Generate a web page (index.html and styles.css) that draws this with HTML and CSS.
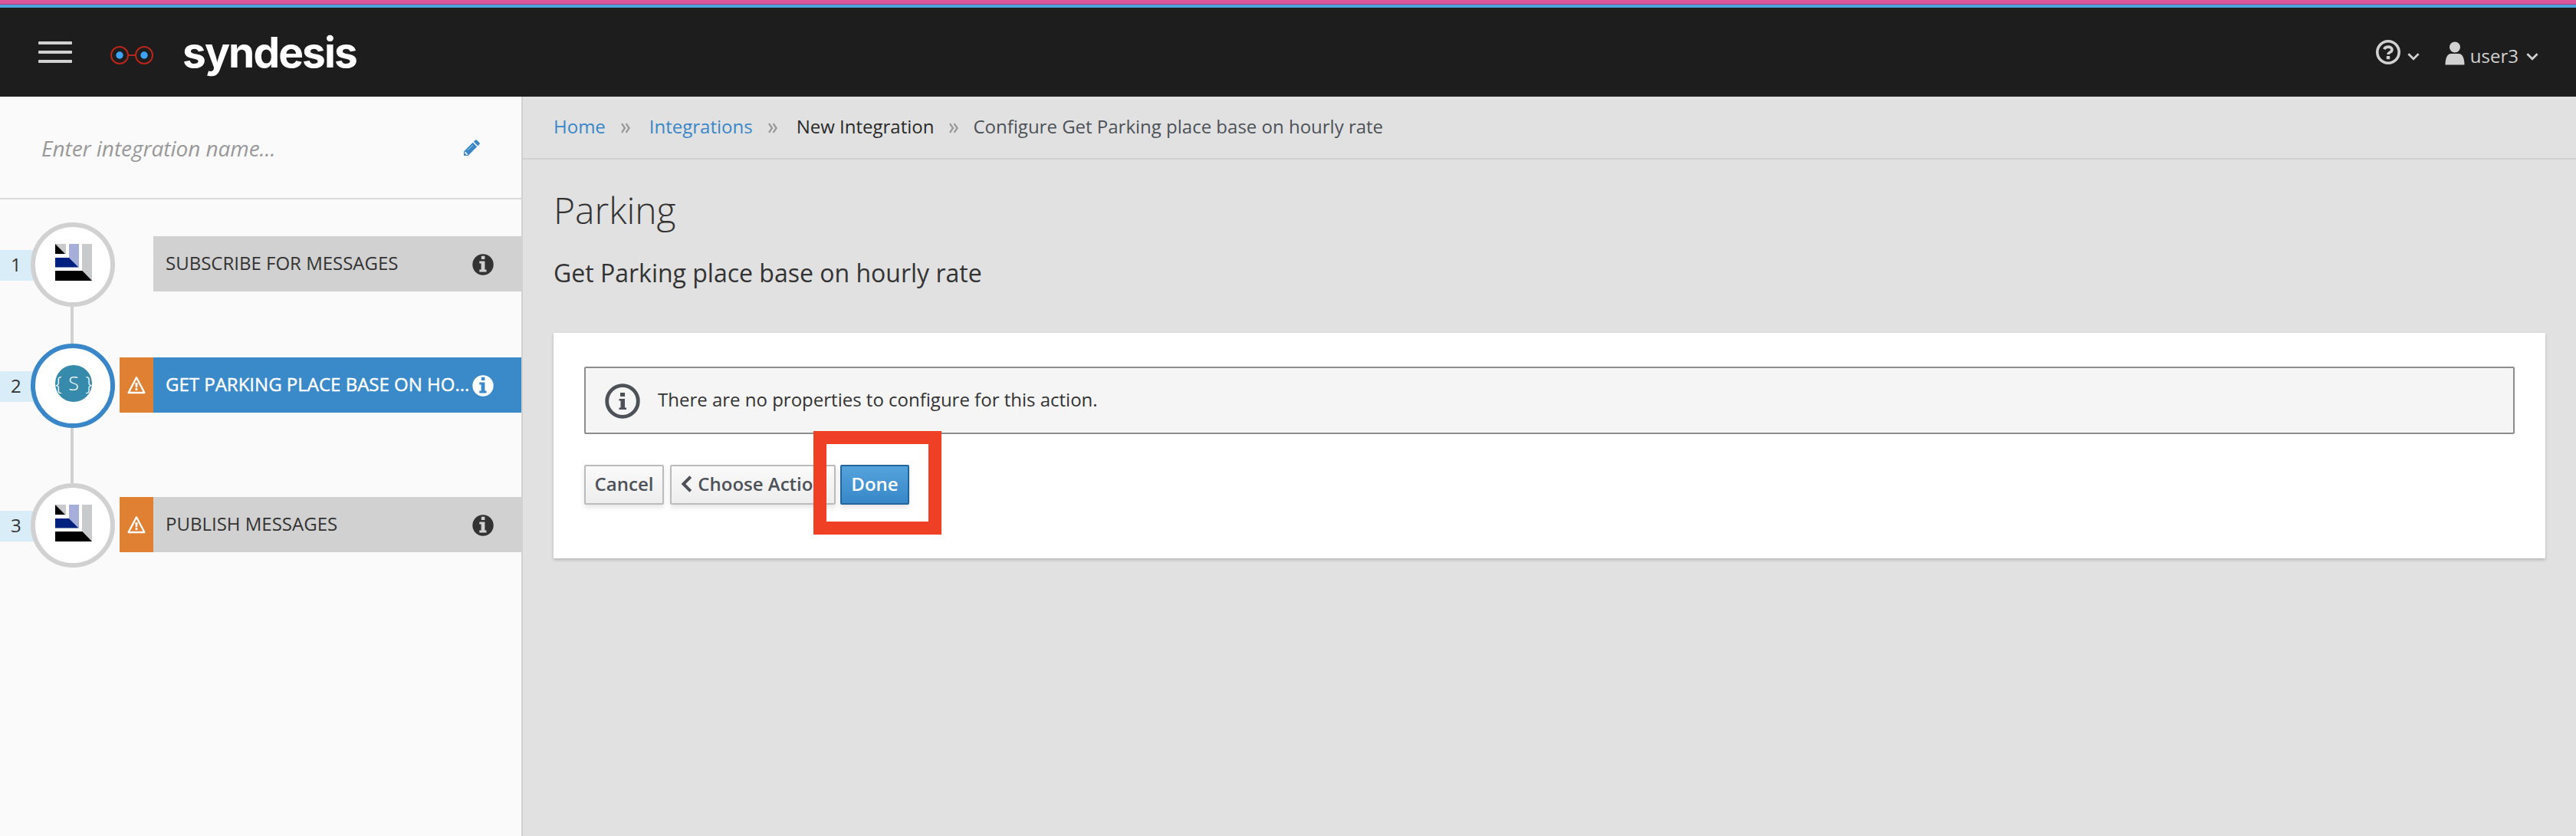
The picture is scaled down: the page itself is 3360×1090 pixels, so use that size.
FILE: index.html
```html
<!DOCTYPE html>
<html lang="en">
<head>
<meta charset="utf-8">
<title>Syndesis</title>
<link rel="stylesheet" href="styles.css">
</head>
<body>
<svg class="defs" width="0" height="0" aria-hidden="true">
  <symbol id="info" viewBox="0 0 28 28">
    <circle cx="14" cy="14" r="13.7" fill="currentColor"/>
    <path class="info-mark" d="M11.8 2.7h4.6v4.3h-4.6zM9.3 9.6h7.1v11h2.1v3H9.3v-3h2.3v-8H9.3z"/>
  </symbol>
  <symbol id="warning" viewBox="0 0 24 24">
    <path d="M12 2.2 22.4 22H1.6Z" fill="none" stroke="currentColor" stroke-width="2.3" stroke-linejoin="round"/>
    <path d="M10.4 9h3.2l-.4 6.2h-2.4zM10.6 16.3h2.8v2.6h-2.8z" fill="currentColor"/>
  </symbol>
  <symbol id="caret" viewBox="0 0 16 10">
    <path d="M1.4 1.3 8 7.8l6.6-6.5" fill="none" stroke="currentColor" stroke-width="2.7"/>
  </symbol>
  <symbol id="angles" viewBox="0 0 12 14">
    <path d="M1 1.2 5 7l-4 5.8M6.6 1.2l4 5.8-4 5.8" fill="none" stroke="currentColor" stroke-width="2.3"/>
  </symbol>
  <symbol id="amq" viewBox="0 0 48 48">
    <path d="M0 0h14v14z" fill="#c9cacc"/>
    <path d="M0 0 13 13H0z" fill="#000"/>
    <path d="M18 0h13v31L18 18z" fill="#a5afda"/>
    <path d="M0 18h18l12.5 12.5H0z" fill="#00207f"/>
    <path d="M35 0h13v48L35 34z" fill="#c9cacc"/>
    <path d="M0 35h35.500l12.500 13H0z" fill="#000"/>
  </symbol>
</svg>

<header class="navbar">
  <div class="brand">
    <button class="menu" aria-label="Menu"><i></i><i></i><i></i></button>
    <svg class="glasses" viewBox="0 0 56 24">
      <g fill="none" stroke="#b8251b" stroke-width="2">
        <circle cx="12" cy="12" r="11"/><circle cx="44" cy="12" r="11"/><path d="M23 12h10"/>
      </g>
      <circle cx="12" cy="12" r="4.700" fill="#3fa2f7"/><circle cx="44" cy="12" r="4.700" fill="#3fa2f7"/>
    </svg>
    <span class="wordmark">syndesis</span>
  </div>
  <div class="tools">
    <svg class="help" viewBox="0 0 32 32">
      <circle cx="16" cy="16" r="14.200" fill="none" stroke="currentColor" stroke-width="3.600"/>
      <path d="M10.700 12.200c1.200-2.300 3-3 5.300-3 3 0 5 1.500 5 3.700 0 3.200-4.800 3-4.800 6" fill="none" stroke="currentColor" stroke-width="3.700"/>
      <path d="M13.800 21h4.400v4.200h-4.400z" fill="currentColor"/>
    </svg>
    <svg class="caret help-caret"><use href="#caret"/></svg>
    <svg class="user" viewBox="0 0 26 31">
      <circle cx="13" cy="7.500" r="7" fill="currentColor"/>
      <path d="M.5 30.500C.7 20 4 16 8 16h10c4 0 7.300 4 7.500 14.500z" fill="currentColor"/>
    </svg>
    <span class="username">user3</span>
    <svg class="caret"><use href="#caret"/></svg>
  </div>
</header>

<div class="layout">
  <aside class="sidebar">
    <div class="name-row">
      <span class="name-placeholder">Enter integration name...</span>
      <svg class="pencil" viewBox="0 0 22 22">
        <path d="M1 15.500 12.700 3.800l5.500 5.500L6.500 21H1z" fill="currentColor"/>
        <path d="M13.800 2.700 15.800.7c.7-.7 1.500-.7 2.200 0l3.300 3.300c.7.700.7 1.500 0 2.200l-2 2z" fill="currentColor"/>
        <path d="M3 15.800 6.200 19l-1 1H3.800v-1.800H2v-1.400z" fill="#fafafa"/>
        <path d="m5.800 14 7-7" stroke="#c5def2" stroke-width=".8"/>
      </svg>
    </div>
    <div class="steps">
      <div class="step">
        <span class="num">1</span>
        <span class="node"><svg class="logo"><use href="#amq"/></svg></span>
        <div class="bar"><span class="label">SUBSCRIBE FOR MESSAGES</span><svg class="info"><use href="#info"/></svg></div>
      </div>
      <div class="link"></div>
      <div class="step active">
        <span class="num">2</span>
        <span class="node"><span class="swagger"><span>{</span><span>S</span><span>}</span></span></span>
        <span class="warn"><svg><use href="#warning"/></svg></span>
        <div class="bar"><span class="label">GET PARKING PLACE BASE ON HO...</span><svg class="info"><use href="#info"/></svg></div>
      </div>
      <div class="link long"></div>
      <div class="step">
        <span class="num">3</span>
        <span class="node"><svg class="logo"><use href="#amq"/></svg></span>
        <span class="warn"><svg><use href="#warning"/></svg></span>
        <div class="bar"><span class="label">PUBLISH MESSAGES</span><svg class="info"><use href="#info"/></svg></div>
      </div>
    </div>
  </aside>

  <main class="main">
    <nav class="breadcrumb">
      <a>Home</a><svg class="sep"><use href="#angles"/></svg>
      <a>Integrations</a><svg class="sep"><use href="#angles"/></svg>
      <span class="dark">New Integration</span><svg class="sep last"><use href="#angles"/></svg>
      <span class="current">Configure Get Parking place base on hourly rate</span>
    </nav>
    <h1>Parking</h1>
    <h2>Get Parking place base on hourly rate</h2>
    <section class="card">
      <div class="alert">
        <svg class="alert-icon" viewBox="0 0 46 46">
          <circle cx="23" cy="23" r="20.300" fill="none" stroke="currentColor" stroke-width="4.800"/>
          <path d="M20 12h6v5h-6zM18.500 20H26v11.500h2V34h-9.500v-2.500h2v-9h-2z" fill="currentColor"/>
        </svg>
        <span>There are no properties to configure for this action.</span>
      </div>
      <div class="actions">
        <button class="btn cancel">Cancel</button>
        <button class="btn choose"><svg class="back" viewBox="0 0 15 22"><path d="M12.800 1.600 3.400 11l9.400 9.400" fill="none" stroke="currentColor" stroke-width="4"/></svg>Choose Action</button>
        <div class="done-wrap">
          <button class="btn primary">Done</button>
          <div class="highlight"></div>
        </div>
      </div>
    </section>
  </main>
</div>
</body>
</html>
```

FILE: styles.css
```css
* { box-sizing: border-box; }
body {
  margin: 0;
  height: 1090px;
  display: flex;
  flex-direction: column;
  overflow: hidden;
  background: #e1e1e1;
  color: #333;
  font: 24px/34px "Open Sans", sans-serif;
}
svg { display: block; flex: none; }
.defs { position: absolute; }
button { font: inherit; padding: 0; border: 0; background: none; }

.navbar {
  height: 126px;
  flex: none;
  display: flex;
  justify-content: space-between;
  background: linear-gradient(#db569c 0 5px, #a83d78 5px 6px, #4fa3dc 6px 10px, #1d1d1d 10px);
  color: #d1d1d1;
}
.brand { display: flex; align-items: flex-start; padding-left: 50px; }
.menu { display: flex; flex-direction: column; gap: 8px; width: 44px; margin-top: 54px; }
.menu i { height: 4px; border-radius: 1px; background: #d1d1d1; }
.glasses { width: 56px; height: 24px; margin: 60px 0 0 50px; }
.wordmark {
  margin: 35px 0 0 38px;
  font: 700 55px/66px Inter, sans-serif;
  letter-spacing: -1.9px;
  color: #fff;
}
.tools { display: flex; align-items: flex-start; padding-right: 49px; }
.help { width: 32px; height: 32px; margin-top: 52px; }
.caret { width: 16px; height: 10px; margin: 69px 0 0 10px; }
.help-caret { margin: 69px 33px 0 9px; }
.user { width: 26px; height: 31px; margin-top: 54px; }
.username { margin: 56px 0 0 7px; }

.layout { flex: 1; display: flex; min-height: 0; }
.sidebar { width: 682px; flex: none; background: #fafafa; border-right: 2px solid #d1d1d1; }
.name-row {
  height: 134px;
  display: flex;
  justify-content: space-between;
  align-items: center;
  padding: 2px 54px 0 54px;
  border-bottom: 2px solid #d9d9d9;
}
.name-placeholder { font-size: 28px; font-style: italic; color: #999; letter-spacing: -.05px; }
.pencil { width: 22px; height: 22px; color: #3987c8; }

.steps { padding-top: 30px; }
.step { height: 110px; display: flex; align-items: flex-start; }
.num {
  width: 50px;
  height: 40px;
  margin: 36px -10px 0 0;
  padding-left: 14px;
  line-height: 37px;
  background: #d9edf8;
}
.node {
  position: relative;
  flex: none;
  width: 110px;
  height: 110px;
  padding: 22px 0 0 26px;
  border: 6px solid #d1d1d1;
  border-radius: 50%;
  background: #fff;
}
.active .node { border-color: #3987c8; }
.logo { width: 48px; height: 48px; }
.swagger {
  display: flex;
  align-items: center;
  justify-content: space-between;
  width: 48px;
  height: 48px;
  padding-bottom: 2px;
  border-radius: 50%;
  background: #368aab;
  color: #fff;
  font: 300 25px/30px "Open Sans", sans-serif;
}
.warn {
  width: 44px;
  height: 72px;
  margin: 18px 0 0 6px;
  padding: 24px 0 0 10px;
  background: #df8033;
  color: #fff;
}
.warn svg { width: 24px; height: 24px; }
.bar {
  width: 480px;
  height: 72px;
  margin: 18px 0 0 auto;
  padding: 0 36px 2px 16px;
  display: flex;
  align-items: center;
  justify-content: space-between;
  background: #d1d1d1;
  color: #333;
}
.label { white-space: nowrap; }
.info { width: 28px; height: 28px; margin-top: 3px; fill: #d1d1d1; }
.info-mark { fill: inherit; }
.active .bar { background: #3a89c8; color: #fff; }
.active .label { -webkit-text-stroke: .4px #fff; }
.active .info { fill: #3a89c8; }
.link { width: 4px; height: 48px; margin-left: 92px; background: #d1d1d1; }
.link.long { height: 72px; }

.main { flex: 1; min-width: 0; }
.breadcrumb {
  height: 82px;
  display: flex;
  align-items: center;
  padding: 0 0 2px 40px;
  border-bottom: 2px solid #d1d1d1;
}
.breadcrumb a { color: #3987c8; }
.sep { width: 12px; height: 14px; margin: 3px 25px 0 20px; color: #999; }
.sep.last { margin-right: 19px; }
.dark { color: #292929; }
.current { color: #4d5258; }
h1 { margin: 34px 0 0 40px; font-size: 48px; font-weight: 300; line-height: 64px; }
h2 { margin: 30px 0 0 40px; font-size: 32px; font-weight: 400; line-height: 40px; }
.card {
  height: 294px;
  margin: 58px 40px 0;
  padding: 44px 40px;
  background: #fff;
  box-shadow: 0 2px 4px rgba(0, 0, 0, .2);
}
.alert {
  height: 88px;
  display: flex;
  align-items: center;
  gap: 23px;
  padding-left: 25px;
  border: 2px solid #8b8d8f;
  border-radius: 2px;
  background: #f5f5f5;
}
.alert span { margin-top: -3px; }
.alert-icon { width: 46px; height: 46px; margin-top: 1px; color: #4d5258; }
.actions { display: flex; margin-top: 40px; }
.btn {
  display: flex;
  align-items: center;
  justify-content: center;
  height: 52px;
  padding-bottom: 2px;
  border: 2px solid #bbb;
  border-radius: 2px;
  background: linear-gradient(#fafafa, #ededed);
  box-shadow: 0 4px 6px rgba(3, 3, 3, .1);
  color: #4d5258;
  font-weight: 600;
  white-space: nowrap;
}
.cancel { width: 104px; }
.choose { width: 216px; margin: 0 6px 0 8px; }
.back { width: 15px; height: 22px; margin-right: 7px; }
.primary { width: 90px; border-color: #23659b; background: linear-gradient(#55a3dc, #3787c9); color: #fff; }
.done-wrap { position: relative; }
.highlight {
  position: absolute;
  left: -35px;
  top: -44px;
  width: 167px;
  height: 135px;
  border: 17px solid #ef4025;
  pointer-events: none;
}
```
